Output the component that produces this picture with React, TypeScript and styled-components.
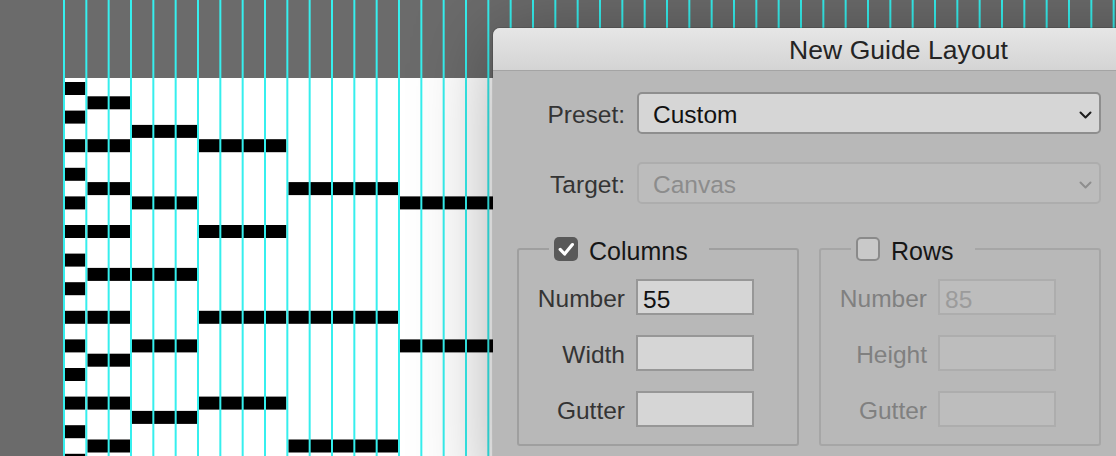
import React from "react";
import styled, { createGlobalStyle } from "styled-components";

const FONT = `"Liberation Sans", Arial, Helvetica, sans-serif`;
const PITCH = 22.3333;
const ROW = 14.3;
const PERIODS = [2, 3, 5, 6, 9, 10];

const GlobalStyle = createGlobalStyle`
  html, body {
    margin: 0;
    padding: 0;
    width: 1116px;
    height: 456px;
    overflow: hidden;
    background: #6b6b6b;
  }
  #root {
    width: 1116px;
    height: 456px;
  }
`;

const Workspace = styled.div`
  position: relative;
  width: 1116px;
  height: 456px;
  box-sizing: border-box;
  padding: 78px 0 0 64px;
  overflow: hidden;
  background: #6b6b6b;
  font-family: ${FONT};
`;

const Document = styled.div`
  width: 1100px;
  height: 420px;
  background: #ffffff;
`;

const Artwork = styled.svg`
  display: block;
`;

const GuideLayer = styled.svg`
  position: absolute;
  left: 0;
  top: 0;
  z-index: 1;
  pointer-events: none;
`;

const Dialog = styled.section`
  position: absolute;
  left: 493px;
  top: 28px;
  z-index: 2;
  width: 811px;
  height: 470px;
  border-radius: 7px 7px 0 0;
  background: #b8b8b8;
  box-shadow: 0 8px 80px rgba(0, 0, 0, 0.34), 0 0 0 1px rgba(0, 0, 0, 0.12);
  overflow: hidden;
  font-family: ${FONT};
`;

const TitleBar = styled.header`
  display: flex;
  align-items: center;
  justify-content: center;
  height: 43px;
  box-sizing: border-box;
  padding-top: 2px;
  border-bottom: 1px solid #a4a4a4;
  background: linear-gradient(#e6e6e6, #d4d4d4);
  color: #242424;
  font-size: 26.5px;
  letter-spacing: 0.05px;
`;

const Body = styled.div`
  display: flex;
  flex-direction: column;
  padding: 21px 0 0 12px;
`;

const FormGrid = styled.div`
  display: grid;
  grid-template-columns: 120px 464px;
  column-gap: 12px;
  row-gap: 28px;
  align-items: center;
`;

const Label = styled.label<{ $disabled?: boolean }>`
  text-align: right;
  font-size: 24.5px;
  padding-top: 4px;
  color: ${(p) => (p.$disabled ? "#808080" : "#343434")};
  white-space: nowrap;
`;

const Select = styled.div<{ $disabled?: boolean }>`
  display: flex;
  align-items: center;
  justify-content: space-between;
  height: 42px;
  box-sizing: border-box;
  padding: 0 7px 0 14px;
  border: 2px solid ${(p) => (p.$disabled ? "#adadad" : "#8e8e8e")};
  border-radius: 5px;
  background: ${(p) => (p.$disabled ? "#bcbcbc" : "#d6d6d6")};
  color: ${(p) => (p.$disabled ? "#8c8c8c" : "#111111")};
  font-size: 24.5px;
`;

const SelectText = styled.span`
  padding-top: 4px;
`;

const Chevron = styled.svg`
  display: block;
  margin-top: 3px;
`;

const Groups = styled.div`
  display: flex;
  gap: 20px;
  margin-top: 33px;
  padding-left: 12px;
`;

const Group = styled.fieldset<{ $disabled?: boolean }>`
  width: 282px;
  min-width: 0;
  box-sizing: border-box;
  margin: 0;
  padding: 18px 0 17px 0;
  border: 2px solid ${(p) => (p.$disabled ? "#a6a6a6" : "#9f9f9f")};
  border-radius: 3px;
`;

const Legend = styled.legend`
  margin-left: 30px;
  padding: 0 21px 0 5px;
  height: 24px;
`;

const LegendInner = styled.span`
  display: inline-flex;
  align-items: center;
  gap: 11px;
  height: 24px;
  font-size: 25px;
  color: #161616;
`;

const LegendText = styled.span`
  padding-top: 4px;
`;

const Check = styled.span<{ $checked?: boolean }>`
  display: inline-flex;
  align-items: center;
  justify-content: center;
  width: 24px;
  height: 24px;
  box-sizing: border-box;
  border-radius: 5px;
  border: ${(p) => (p.$checked ? "none" : "2px solid #8a8a8a")};
  background: ${(p) => (p.$checked ? "#595959" : "#c9c9c9")};
`;

const FieldGrid = styled.div`
  display: grid;
  grid-template-columns: 106px 118px;
  column-gap: 11px;
  row-gap: 20px;
  align-items: center;
`;

const Field = styled.input<{ $disabled?: boolean }>`
  width: 118px;
  height: 36px;
  box-sizing: border-box;
  margin: 0;
  padding: 5px 0 0 5px;
  border: 2px solid ${(p) => (p.$disabled ? "#adadad" : "#979797")};
  border-radius: 0;
  outline: none;
  background: ${(p) => (p.$disabled ? "#bdbdbd" : "#d6d6d6")};
  color: ${(p) => (p.$disabled ? "#9b9b9b" : "#111111")};
  -webkit-text-fill-color: ${(p) => (p.$disabled ? "#9b9b9b" : "#111111")};
  opacity: 1;
  font-family: ${FONT};
  font-size: 24.5px;
`;

function ChevronIcon({ color }: { color: string }) {
  return (
    <Chevron width="13" height="8" viewBox="0 0 13 8">
      <polyline
        points="1.5,1.5 6.5,6.5 11.5,1.5"
        fill="none"
        stroke={color}
        strokeWidth="2"
        strokeLinecap="round"
        strokeLinejoin="round"
      />
    </Chevron>
  );
}

function Bars() {
  const rects: React.ReactNode[] = [];
  for (let r = 0; r < 28; r++) {
    PERIODS.forEach((period, i) => {
      const k = i + 1;
      if ((r + 2) % period !== 0) return;
      const start = (k * (k - 1)) / 2;
      const end = (k * (k + 1)) / 2;
      const x = start * PITCH + 1;
      const w = (end - start) * PITCH - 2;
      rects.push(
        <rect key={`${r}-${k}`} x={x} y={4 + r * ROW} width={w} height={13} fill="#000" />
      );
    });
  }
  return (
    <Artwork width="1100" height="420" viewBox="0 0 1100 420">
      {rects}
    </Artwork>
  );
}

function Guides() {
  const lines: React.ReactNode[] = [];
  for (let k = 0; k < 48; k++) {
    const x = 64 + k * PITCH;
    lines.push(<line key={k} x1={x} y1={0} x2={x} y2={456} stroke="#36efee" strokeWidth="2" />);
  }
  return (
    <GuideLayer width="1116" height="456" viewBox="0 0 1116 456">
      {lines}
    </GuideLayer>
  );
}

function GuideFieldset({
  title,
  checked,
  disabled,
  labels,
  first,
}: {
  title: string;
  checked: boolean;
  disabled: boolean;
  labels: string[];
  first: string;
}) {
  return (
    <Group $disabled={disabled}>
      <Legend>
        <LegendInner>
          <Check $checked={checked}>
            {checked && (
              <svg width="24" height="24" viewBox="0 0 24 24">
                <polyline
                  points="6.2,12.4 10.6,17 18.4,7.6"
                  fill="none"
                  stroke="#ffffff"
                  strokeWidth="3.2"
                  strokeLinecap="round"
                  strokeLinejoin="round"
                />
              </svg>
            )}
          </Check>
          <LegendText>{title}</LegendText>
        </LegendInner>
      </Legend>
      <FieldGrid>
        {labels.map((l, i) => (
          <React.Fragment key={l}>
            <Label $disabled={disabled}>{l}</Label>
            <Field
              $disabled={disabled}
              disabled={disabled}
              readOnly
              defaultValue={i === 0 ? first : ""}
            />
          </React.Fragment>
        ))}
      </FieldGrid>
    </Group>
  );
}

export default function App() {
  return (
    <>
      <GlobalStyle />
      <Workspace>
        <Document>
          <Bars />
        </Document>
        <Guides />
        <Dialog>
          <TitleBar>New Guide Layout</TitleBar>
          <Body>
            <FormGrid>
              <Label>Preset:</Label>
              <Select>
                <SelectText>Custom</SelectText>
                <ChevronIcon color="#1c1c1c" />
              </Select>
              <Label>Target:</Label>
              <Select $disabled>
                <SelectText>Canvas</SelectText>
                <ChevronIcon color="#8e8e8e" />
              </Select>
            </FormGrid>
            <Groups>
              <GuideFieldset
                title="Columns"
                checked
                disabled={false}
                labels={["Number", "Width", "Gutter"]}
                first="55"
              />
              <GuideFieldset
                title="Rows"
                checked={false}
                disabled
                labels={["Number", "Height", "Gutter"]}
                first="85"
              />
            </Groups>
          </Body>
        </Dialog>
      </Workspace>
    </>
  );
}
